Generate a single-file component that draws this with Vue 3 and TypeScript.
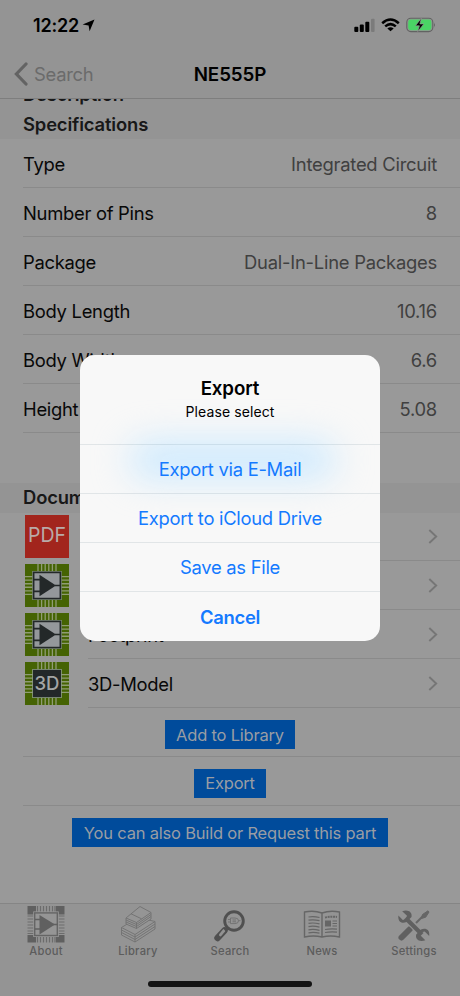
<script setup lang="ts">
interface Spec { label: string; value: string }
interface Doc { kind: 'pdf' | 'chip' | 'cube'; label: string }
interface Tab { id: string; label: string }

const specs: Spec[] = [
  { label: 'Type', value: 'Integrated Circuit' },
  { label: 'Number of Pins', value: '8' },
  { label: 'Package', value: 'Dual-In-Line Packages' },
  { label: 'Body Length', value: '10.16' },
  { label: 'Body Width', value: '6.6' },
  { label: 'Height', value: '5.08' },
]
const docs: Doc[] = [
  { kind: 'pdf', label: '' },
  { kind: 'chip', label: '' },
  { kind: 'chip', label: 'Footprint' },
  { kind: 'cube', label: '3D-Model' },
]
const actions: string[] = ['Add to Library', 'Export', 'You can also Build or Request this part']
const choices: string[] = ['Export via E-Mail', 'Export to iCloud Drive', 'Save as File']
const tabs: Tab[] = [
  { id: 'about', label: 'About' },
  { id: 'library', label: 'Library' },
  { id: 'search', label: 'Search' },
  { id: 'news', label: 'News' },
  { id: 'settings', label: 'Settings' },
]
const pins: number[] = [13, 16.6, 20.2, 23.8, 27.4, 31]
</script>

<template>
  <div class="phone">
    <header class="top">
      <div class="status">
        <span class="time">12:22</span>
        <svg class="loc" width="13" height="13" viewBox="0 0 13 13"><path d="M12.5 .5 7.6 12.2 6.6 6.6.6 5.4Z" fill="#000" /></svg>
        <svg class="signal" width="21" height="15" viewBox="0 0 21 15">
          <rect x=".3" y="8.8" width="4" height="5.2" rx="1" fill="#000" />
          <rect x="5.8" y="6.6" width="4" height="7.4" rx="1" fill="#000" />
          <rect x="11.3" y="3.8" width="4" height="10.2" rx="1" fill="#000" />
          <rect x="17" y=".8" width="3.6" height="13.2" rx="1" fill="#7b7b7b" />
        </svg>
        <svg class="wifi" width="19" height="14" viewBox="0 0 19 14">
          <path d="M1.2 5.2Q9.5-2.2 17.8 5.2M4.2 8.4q5.3-4.6 10.6 0" fill="none" stroke="#000" stroke-width="2.5" />
          <path d="M9.5 13.3 6.3 10.4q3.2-2.4 6.4 0Z" fill="#000" />
        </svg>
        <svg class="battery" width="30" height="16" viewBox="0 0 30 16">
          <rect x=".8" y="1.2" width="26" height="13.4" rx="4" fill="none" stroke="#626262" stroke-width="1.1" />
          <rect x="2.2" y="2.6" width="23.2" height="10.6" rx="2.4" fill="#4ad465" />
          <path d="M28 5.6q1.8 2.2 0 4.6Z" fill="#626262" />
          <path d="M15.4 1.2 9.4 8.8h4L11.7 14.6 17.9 6.9h-4Z" fill="#000" stroke="#979797" stroke-width=".7" />
        </svg>
      </div>
      <div class="nav">
        <span class="back">
          <svg width="14" height="24" viewBox="0 0 14 24"><path d="M12 2 2.4 12 12 22" fill="none" stroke="#636363" stroke-width="3.2" stroke-linecap="round" /></svg>
          <span>Search</span>
        </span>
        <h1>NE555P</h1>
      </div>
    </header>

    <main class="content">
      <div class="section first">
        <h2>Description</h2>
        <h2>Specifications</h2>
      </div>
      <ul class="list">
        <li v-for="s in specs" :key="s.label" class="row">
          <span>{{ s.label }}</span><span class="value">{{ s.value }}</span>
        </li>
      </ul>
      <div class="section docs-head"><h2>Documents</h2></div>
      <ul class="list">
        <li v-for="(d, i) in docs" :key="i" class="doc">
          <svg class="doc-icon" width="44" height="43" viewBox="0 0 44 44" preserveAspectRatio="none">
            <template v-if="d.kind === 'pdf'">
              <rect width="44" height="44" fill="#a2251d" />
              <text x="22" y="27.500" text-anchor="middle" class="pdf" textLength="38" lengthAdjust="spacingAndGlyphs">PDF</text>
            </template>
            <template v-else>
              <rect width="44" height="44" fill="#456303" />
              <path v-for="p in pins" :key="p" :d="`M${p} 0V44M0 ${p}H44`" stroke="#909c74" stroke-width="1.3" />
              <rect x="7.2" y="7.2" width="29.6" height="29.6" fill="#8d9d87" />
              <template v-if="d.kind === 'chip'">
                <rect x="8.6" y="8.6" width="26.8" height="26.8" fill="#94989b" stroke="#232829" stroke-width="1.7" />
                <path d="M14.5 11v22L31 22Z" fill="#232829" />
                <path d="M9 16h6M9 28h6M30 22h6" stroke="#232829" stroke-width="1.6" />
              </template>
              <template v-else>
                <rect x="8" y="8" width="28" height="28" fill="#232829" />
                <text x="22" y="29" text-anchor="middle" class="cube" textLength="25" lengthAdjust="spacingAndGlyphs">3D</text>
              </template>
            </template>
          </svg>
          <div class="doc-body">
            <span>{{ d.label }}</span>
            <svg width="10" height="15" viewBox="0 0 10 15"><path d="M1.3 1 8.2 7.5 1.3 14" fill="none" stroke="#767676" stroke-width="1.9" /></svg>
          </div>
        </li>
        <li v-for="a in actions" :key="a" class="action"><button>{{ a }}</button></li>
      </ul>
    </main>

    <nav class="tabs">
      <div v-for="t in tabs" :key="t.id" class="tab">
        <svg v-if="t.id === 'about'" width="40" height="40" viewBox="0 0 40 40">
          <path d="M1.5 2h37v36.500h-37Z" fill="#949494" />
          <path d="M11.500 2v36.500M14.500 2v36.500M17.500 2v36.500M20.500 2v36.500M23.500 2v36.500M26.500 2v36.500M29 2v36.500M1.500 12h37M1.500 15h37M1.500 18h37M1.500 21h37M1.500 24h37M1.500 27h37M1.500 29.500h37" stroke="#6c6c6c" stroke-width="1.200" />
          <path d="M1.500 2h8.500v8.500H1.500ZM30 2h8.500v8.500H30ZM1.500 31h8.500v7.500H1.500ZM30 31h8.500v7.500H30Z" fill="#606060" />
          <rect x="7.200" y="7.400" width="25.600" height="25.600" fill="#959595" />
          <rect x="8.700" y="8.900" width="22.600" height="22.600" fill="#959595" stroke="#656565" stroke-width="1.400" />
          <path d="M13.500 11v19.500L29 20.500Z" fill="#606060" />
          <path d="M9 15.500h5M9 25h5M27 20.500h5" stroke="#606060" stroke-width="1.400" />
        </svg>
        <svg v-else-if="t.id === 'library'" width="40" height="40" viewBox="0 0 40 40" fill="#959595" stroke="#707070" stroke-width=".9" stroke-linejoin="round">
          <path d="M3.500 23.500 20 13.500l17 4v7.500L17 38 3.500 31Z" />
          <path d="m3.500 23.500 13.500 7 20-13M3.500 26l13.500 7 20-13M3.500 28.500l13.500 7 20-13M17 30.500V38" />
          <path d="M8 14 22 2.500l11 6v6.500L18.500 24.500 8 20Z" />
          <path d="m8 14 10.500 4.500L33 8.500M8 16l10.500 4.500L33 10.500M8 18l10.500 4.500L33 12.500M18.500 18.500v6M13 9.800l10.500 5" />
        </svg>
        <svg v-else-if="t.id === 'search'" width="40" height="40" viewBox="0 0 40 40" fill="none" stroke="#505050">
          <path d="M14.500 26.500 7.500 34" stroke-width="6.400" stroke-linecap="round" />
          <path d="m14 26.500-3.600 4.400" stroke="#929292" stroke-width="2.800" stroke-linecap="round" />
          <circle cx="24" cy="17" r="9.300" stroke-width="2.900" />
          <path d="m18 23.500-3 3" stroke-width="3" />
          <path d="M20.500 14h4.500q3.500 0 3.500 2.800T25 19.600h-4.500ZM18 15.500h2M18 18h2M28.500 16.700h2M22.500 16h3.500M22.500 17.800h3.500" stroke="#737373" stroke-width="1" />
        </svg>
        <svg v-else-if="t.id === 'news'" width="40" height="40" viewBox="0 0 40 40" fill="none" stroke="#666">
          <path d="M20 9q-8-3-17.500-1v25q9-2 17.500 0 8.500-2 17.500 0V8Q28 6 20 9v24.500" stroke-width="1.400" />
          <path d="M6.500 13q5-1 11 .5M6.500 16.200q5-1 11 .5M6.500 19.400q5-1 11 .5M6.500 22.600q5-1 11 .5M6.500 25.800q5-1 11 .5M6.500 28.800q5-1 11 .3M30.500 17h4.500M30.500 19.500h4.500M30.500 22h4.500M23 25.500q6-1 12-.3M23 28.500q6-1 12-.3" stroke-width="1.200" />
          <path d="M23 13.500q6-1.300 12-.5" stroke-width="2" stroke-dasharray="2 .7" />
          <path d="M23 16.500h6v6h-6Z" fill="#666" stroke="none" />
        </svg>
        <svg v-else width="40" height="40" viewBox="0 0 40 40">
          <path d="m7.500 33.500 8-8" stroke="#606060" stroke-width="6" stroke-linecap="round" />
          <path d="m20.500 20.500 9-9" stroke="#666" stroke-width="2" />
          <path d="m27.500 14.500 1-4 5.500-3.700 1 1.200-3.300 5.200Z" fill="#666" stroke="#666" />
          <path d="m13 15 13.500 13.500" stroke="#959595" stroke-width="7" />
          <path d="m11.500 14 16.500 16.500" stroke="#606060" stroke-width="4.200" />
          <path d="M8.200 7.200 13 11.800l-.8 3.300-3.400.8L4.400 11.400C3.600 17.500 7.500 20 12.500 18l5-5C18.500 8.500 14.500 5 8.200 7.200ZM31.300 36.300l-4.800-4.700.8-3.300 3.400-.8 4.500 4.500c.8-6-3.200-8.500-8.200-6.500l-4.800 5c-1.200 4.500 2.600 8 9.100 5.800Z" fill="#606060" />
        </svg>
        <span>{{ t.label }}</span>
      </div>
    </nav>
    <div class="home"></div>

    <section class="alert">
      <div class="alert-head">
        <h3>Export</h3>
        <p>Please select</p>
      </div>
      <button v-for="c in choices" :key="c">{{ c }}</button>
      <button class="cancel">Cancel</button>
    </section>
  </div>
</template>

<style>
body { margin: 0; background: #999; }
</style>

<style scoped>
.phone {
  position: relative; width: 460px; height: 996px; overflow: hidden; box-sizing: border-box;
  display: flex; flex-direction: column; background: #999; color: #080808;
  font-family: Inter, "Liberation Sans", sans-serif; font-size: 18.400px; letter-spacing: -.28px;
}
h1, h2, h3, p, ul { margin: 0; padding: 0; }
button { border: 0; font: inherit; letter-spacing: inherit; }
.top { height: 99px; box-sizing: border-box; background: #949494; border-bottom: 1px solid #7e7e7e; flex: none; }
.status { display: flex; align-items: center; height: 50px; padding: 0 24px 0 33px; }
.time { font-size: 18px; font-weight: 600; color: #000; letter-spacing: -.2px; }
.loc { margin-left: 3px; }
.signal { margin-left: auto; }
.wifi { margin-left: 6px; }
.battery { margin-left: 6px; }
.nav { display: grid; grid-template-columns: 1fr auto 1fr; align-items: center; height: 48px; }
.back { display: flex; align-items: center; gap: 6px; padding-left: 14px; color: #6b6b6b; }
h1 { font-size: 18.800px; font-weight: 600; color: #000; letter-spacing: -.1px; }
.content { flex: 1; }
.section { background: #949494; display: flex; flex-direction: column; justify-content: flex-end; overflow: hidden; padding-left: 23px; }
.section h2 { font-size: 18.400px; line-height: 30px; font-weight: 600; color: #181818; flex: none; letter-spacing: -.15px; }
.first { height: 40px; }
.docs-head { margin-top: 50px; height: 29.500px; }
.docs-head h2 { line-height: 31px; }
.list { list-style: none; }
.row { height: 49px; box-sizing: border-box; margin-left: 23px; padding: 1px 23px 0 0; border-bottom: 1px solid #8a8a8a; display: flex; align-items: center; justify-content: space-between; }
.value { color: #404040; letter-spacing: -.24px; }
.doc { height: 48.900px; display: flex; align-items: center; padding-left: 25px; gap: 19px; }
.doc-icon { flex: none; }
.doc-body { flex: 1; height: 100%; box-sizing: border-box; border-bottom: 1px solid #8a8a8a; padding: 1px 22px 0 0; display: flex; align-items: center; justify-content: space-between; }
.pdf { font-size: 21px; fill: #b9aaa8; letter-spacing: 0; }
.cube { font-size: 19px; font-weight: 500; fill: #a3a5a5; letter-spacing: 0; }
.action { height: 48.900px; box-sizing: border-box; margin-left: 23px; padding: 5px 23px 0 0; border-bottom: 1px solid #8a8a8a; display: flex; align-items: center; justify-content: center; }
.action:last-child { border-bottom: 0; }
.action button { height: 29px; padding: 0 11.500px; background: #004b9b; color: #999da4; font-size: 16.500px; letter-spacing: -.2px; white-space: nowrap; }
.tabs { flex: none; height: 93px; box-sizing: border-box; background: #949494; border-top: 1px solid #858585; display: grid; grid-template-columns: repeat(5, 1fr); }
.tab { display: flex; flex-direction: column; align-items: center; font-size: 11.200px; font-weight: 500; color: #5c5c5c; letter-spacing: .25px; }
.tab span { line-height: 14px; }
.home { position: absolute; left: 148px; top: 981px; width: 164px; height: 6px; border-radius: 3px; background: #141414; }
.alert {
  position: absolute; left: 80px; top: 355px; width: 300px; height: 286px; border-radius: 15px; overflow: hidden;
  display: flex; flex-direction: column; background: #f8f8f8;
}
.alert::before {
  content: ""; position: absolute; left: 50px; top: 88px; width: 205px; height: 34px; border-radius: 17px;
  background: #c8e8ff; filter: blur(18px);
}
.alert > * { position: relative; }
.alert-head { height: 88.500px; box-sizing: border-box; padding-top: 22px; text-align: center; color: #000; }
h3 { font-size: 18.700px; line-height: 23px; font-weight: 600; letter-spacing: -.1px; }
.alert-head p { font-size: 14px; line-height: 24px; letter-spacing: .1px; }
.alert button { height: 49.200px; padding: .500px 0 0; background: none; border-top: 1px solid rgba(0, 40, 70, .09); color: #147aff; }
.alert .cancel { font-weight: 600; flex: 1; }
</style>
